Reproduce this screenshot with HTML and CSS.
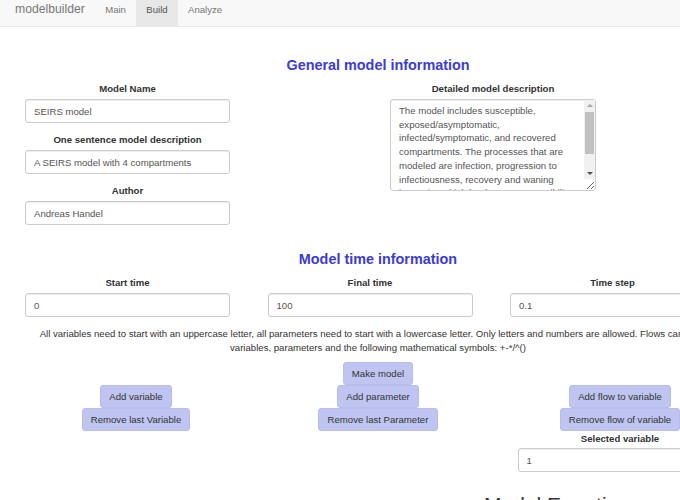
FILE: index.html
```html
<!DOCTYPE html>
<html lang="en">
<head>
<meta charset="utf-8">
<title>modelbuilder</title>
<link rel="stylesheet" href="styles.css">
</head>
<body>
<div class="page">
  <nav class="navbar">
    <span class="brand">modelbuilder</span>
    <a class="nav-link">Main</a>
    <a class="nav-link active">Build</a>
    <a class="nav-link">Analyze</a>
  </nav>

  <div class="content">
    <h2 class="section-title">General model information</h2>

    <div class="general-grid">
      <div class="stack">
        <div class="field">
          <label class="field-label">Model Name</label>
          <input class="text-input" type="text" value="SEIRS model">
        </div>
        <div class="field">
          <label class="field-label">One sentence model description</label>
          <input class="text-input" type="text" value="A SEIRS model with 4 compartments">
        </div>
        <div class="field">
          <label class="field-label">Author</label>
          <input class="text-input" type="text" value="Andreas Handel">
        </div>
      </div>
      <div class="field wide">
        <label class="field-label">Detailed model description</label>
        <div class="textarea-wrap">
          <textarea class="text-area">The model includes susceptible, exposed/asymptomatic, infected/symptomatic, and recovered compartments. The processes that are modeled are infection, progression to infectiousness, recovery and waning immunity, which leads to re-susceptibility.</textarea>
          <div class="fake-scrollbar" aria-hidden="true">
            <span class="sb-btn"><span class="arrow-up"></span></span>
            <span class="sb-track"><span class="sb-thumb"></span></span>
            <span class="sb-btn"><span class="arrow-down"></span></span>
          </div>
        </div>
      </div>
    </div>

    <h2 class="section-title time-title">Model time information</h2>

    <div class="time-grid">
      <div class="field">
        <label class="field-label">Start time</label>
        <input class="text-input" type="text" value="0">
      </div>
      <div class="field">
        <label class="field-label">Final time</label>
        <input class="text-input" type="text" value="100">
      </div>
      <div class="field">
        <label class="field-label">Time step</label>
        <input class="text-input" type="text" value="0.1">
      </div>
    </div>

    <p class="instructions">All variables need to start with an uppercase letter, all parameters need to start with a lowercase letter. Only letters and numbers are allowed. Flows can include variables, parameters and the following mathematical symbols: +-*/^()</p>

    <div class="make-row">
      <button class="btn">Make model</button>
    </div>

    <div class="button-grid">
      <div class="btn-col">
        <button class="btn">Add variable</button>
        <button class="btn">Remove last Variable</button>
      </div>
      <div class="btn-col">
        <button class="btn">Add parameter</button>
        <button class="btn">Remove last Parameter</button>
      </div>
      <div class="btn-col">
        <button class="btn">Add flow to variable</button>
        <button class="btn">Remove flow of variable</button>
        <div class="field selected">
          <label class="field-label">Selected variable</label>
          <input class="text-input" type="text" value="1">
        </div>
      </div>
    </div>

    <h3 class="equations-title">Model Equations</h3>
  </div>
</div>
</body>
</html>
```

FILE: styles.css
```css
html, body {
  margin: 0;
  padding: 0;
  overflow: hidden;
  background: #fff;
}

body {
  font-family: "Liberation Sans", Arial, sans-serif;
  font-size: 9.6px;
  color: #333;
}

.page {
  width: 756px;
}

/* navbar */
.navbar {
  display: flex;
  height: 26px;
  background: #f8f8f8;
  border-bottom: 1px solid #e7e7e7;
}

.brand {
  font-size: 12.2px;
  line-height: 16px;
  padding: 1px 10.2px 0 15px;
  color: #777;
}

.nav-link {
  font-size: 9.6px;
  line-height: 14px;
  padding: 3px 10.2px 9px;
  color: #777;
}

.nav-link.active {
  background: #e7e7e7;
  color: #555;
}

/* content */
.content {
  padding: 0 15px;
}

.section-title {
  margin: 28px 0 0;
  font-size: 14.4px;
  line-height: 20px;
  font-weight: bold;
  text-align: center;
  color: #3c3cd2;
}

.time-title {
  margin-top: 14px;
}

.field {
  display: flex;
  flex-direction: column;
  width: 205px;
}

.field-label {
  display: block;
  font-weight: bold;
  font-size: 9.6px;
  line-height: 14px;
  margin-bottom: 3px;
  text-align: center;
  color: #333;
}

.text-input {
  box-sizing: border-box;
  width: 205px;
  height: 24px;
  margin: 0;
  padding: 0 8px;
  border: 1px solid #ccc;
  border-radius: 3px;
  box-shadow: inset 0 1px 1px rgba(0, 0, 0, 0.075);
  font-family: "Liberation Sans", Arial, sans-serif;
  font-size: 9.6px;
  color: #555;
  background: #fff;
}

.general-grid {
  display: grid;
  grid-template-columns: 205px 206px;
  column-gap: 160px;
  padding-left: 10px;
  margin-top: 7px;
  align-items: start;
}

.stack .field {
  margin-bottom: 10px;
}

.field.wide {
  width: 206px;
}

.textarea-wrap {
  position: relative;
  width: 206px;
  height: 92px;
}

.text-area {
  display: block;
  box-sizing: border-box;
  width: 206px;
  height: 92px;
  margin: 0;
  padding: 4px 19px 4px 8px;
  border: 1px solid #ccc;
  border-radius: 3px;
  box-shadow: inset 0 1px 1px rgba(0, 0, 0, 0.075);
  font-family: "Liberation Sans", Arial, sans-serif;
  font-size: 9.6px;
  line-height: 13.7px;
  color: #555;
  resize: vertical;
  overflow: hidden;
}

.fake-scrollbar {
  position: absolute;
  top: 1px;
  right: 1px;
  width: 11px;
  height: 79px;
  display: flex;
  flex-direction: column;
  background: #f1f1f1;
}

.sb-btn {
  height: 11px;
  display: flex;
  align-items: center;
  justify-content: center;
}

.arrow-up,
.arrow-down {
  width: 0;
  height: 0;
  border-left: 3px solid transparent;
  border-right: 3px solid transparent;
}

.arrow-up {
  border-bottom: 3px solid #a3a3a3;
}

.arrow-down {
  border-top: 3px solid #505050;
}

.sb-track {
  flex: 1;
  padding: 1px 1px 0;
}

.sb-thumb {
  display: block;
  height: 42px;
  background: #c1c1c1;
}

.time-grid {
  display: grid;
  grid-template-columns: 205px 205px 205px;
  column-gap: 37.5px;
  padding-left: 10px;
  margin-top: 7px;
}

.instructions {
  margin: 10px 18px 0;
  line-height: 14px;
  text-align: center;
  color: #333;
}

.make-row {
  display: flex;
  justify-content: center;
  margin-top: 7px;
}

.btn {
  box-sizing: border-box;
  height: 23px;
  margin: 0;
  padding: 4px 8.2px;
  border: 1px solid #b8beec;
  border-radius: 3px;
  background: #bfc5f0;
  font-family: "Liberation Sans", Arial, sans-serif;
  font-size: 9.6px;
  line-height: 13px;
  color: #333;
  white-space: nowrap;
}

.button-grid {
  display: grid;
  grid-template-columns: 242px 242px 242px;
}

.btn-col {
  display: flex;
  flex-direction: column;
  align-items: center;
}

.field.selected {
  margin-top: 1px;
}

.field.selected .field-label {
  margin-bottom: 2px;
}

.equations-title {
  margin: 21px 0 0 469px;
  font-size: 21px;
  line-height: 24px;
  font-weight: normal;
  color: #333;
  white-space: nowrap;
}
```
